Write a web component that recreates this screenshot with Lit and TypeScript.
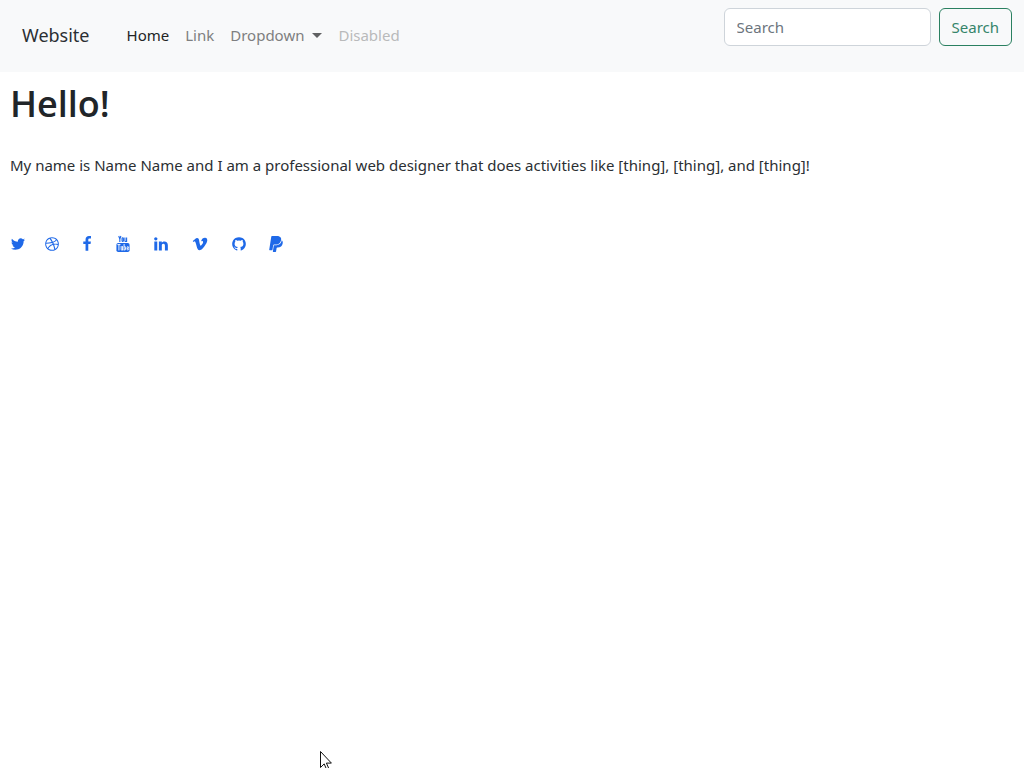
import { LitElement, html, css, svg } from "lit";
import { customElement } from "lit/decorators.js";

const glyph = (d: string) => svg`<path fill="currentColor" d=${d}></path>`;

const links = [
  {
    name: "Twitter",
    art: glyph("M1684 408q-67 98-162 167 1 14 1 42 0 130-38 259.5t-115.5 248.5-184.5 210.5-258 146-323 54.5q-271 0-496-145 35 4 78 4 225 0 401-138-105-2-188-64.5t-114-159.5q33 5 61 5 43 0 85-11-112-23-185.5-111.5t-73.5-205.5v-4q68 38 146 41-66-44-105-115t-39-154q0-88 44-163 121 149 294.5 238.5t371.5 99.5q-8-38-8-74 0-134 94.5-228.5t228.5-94.5q140 0 236 102 109-21 205-78-37 115-142 178 93-10 186-50z"),
  },
  {
    name: "Dribbble",
    art: glyph("M1152 1500q-42-241-140-498h-2l-2 1q-16 6-43 16.5t-101 49-137 82-131 114.5-103 148l-15-11q184 150 418 150 132 0 256-52zm-185-607q-21-49-53-111-311 93-673 93-1 7-1 21 0 124 44 236.5t124 201.5q50-89 123.5-166.5t142.5-124.5 130.5-81 99.5-48l37-13q4-1 13-3.5t13-4.5zm-107-212q-120-213-244-378-138 65-234 186t-128 272q302 0 606-80zm684 319q-210-60-409-29 87 239 128 469 111-75 185-189.5t96-250.5zm-803-741q-1 0-2 1 1-1 2-1zm590 145q-185-164-433-164-76 0-155 19 131 170 246 382 69-26 130-60.5t96.5-61.5 65.5-57 37.5-40.5zm223 485q-3-232-149-410l-1 1q-9 12-19 24.5t-43.5 44.5-71 60.5-100 65-131.5 64.5q25 53 44 95 2 5 6.5 17t7.5 17q36-5 74.5-7t73.5-2 69 1.5 64 4 56.5 5.5 48 6.5 36.5 6 25 4.5zm112 7q0 209-103 385.5t-279.5 279.5-385.5 103-385.5-103-279.5-279.5-103-385.5 103-385.5 279.5-279.5 385.5-103 385.5 103 279.5 279.5 103 385.5z"),
  },
  {
    name: "Facebook",
    art: glyph("M1343 12v264h-157q-86 0-116 36t-30 108v189h293l-39 296h-254v759h-306v-759h-255v-296h255v-218q0-186 104-288.5t277-102.5q147 0 228 12z"),
  },
  {
    name: "YouTube",
    art: svg`
      <path fill="none" stroke="currentColor" stroke-width="125" d="M420 0l120 340v340M660 0l-120 340M790 270q0-80 75-80t75 80v270q0 80-75 80t-75-80zM1110 180v380q0 60 60 60 60 0 130-80M1300 180v500"></path>
      <rect fill="currentColor" x="160" y="790" width="1472" height="1000" rx="200"></rect>
      <path fill="none" stroke="#fff" stroke-width="105" d="M270 960h340M440 960v660M690 1130v380q0 60 50 60 50 0 110-80M850 1130v490M1020 900v720M1020 1250q40-60 90-60 70 0 70 80v220q0 80-70 80-50 0-90-60M1510 1460v30q0 80-75 80t-75-80v-220q0-80 75-80t75 80v110h-150"></path>`,
  },
  {
    name: "LinkedIn",
    art: glyph("M477 625v991h-330v-991h330zm21-306q1 73-50.5 122t-135.5 49h-2q-82 0-132-49t-50-122q0-74 51.5-122.5t134.5-48.5 133 48.5 51 122.5zm1166 729v568h-329v-530q0-105-40.5-164.5t-126.5-59.5q-63 0-105.5 34.5t-63.5 85.5q-11 30-11 81v553h-329q2-399 2-647t-1-296l-1-48h329v144h-2q20-32 41-56t56.5-52 87-43.5 114.5-15.5q171 0 275 113.5t104 332.5z"),
  },
  {
    name: "Vimeo",
    art: glyph("M1709 518q-10 236-332 651-333 431-562 431-142 0-240-263-44-160-132-482-72-262-157-262-18 0-127 76l-77-98q24-21 108-96.5t130-115.5q156-138 241-146 95-9 153 55.5t81 203.5q44 287 66 373 55 249 120 249 51 0 154-161 101-161 109-246 13-139-109-139-57 0-121 26 120-393 459-382 251 8 236 326z"),
  },
  {
    name: "GitHub",
    art: glyph("M896 128q209 0 385.5 103t279.5 279.5 103 385.5q0 251-146.5 451.5t-378.5 277.5q-27 5-40-7t-13-30q0-3 .5-76.5t.5-134.5q0-97-52-142 57-6 102.5-18t94-39 81-66.5 53-105 20.5-150.5q0-119-79-206 37-91-8-204-28-9-81 11t-92 44l-38 24q-93-26-192-26t-192 26q-16-11-42.5-27t-83.5-38.5-85-13.5q-45 113-8 204-79 87-79 206 0 85 20.5 150t52.5 105 80.5 67 94 39 102.5 18q-39 36-49 103-21 10-45 15t-57 5-65.5-21.5-55.5-62.5q-19-32-48.5-52t-49.5-24l-20-3q-21 0-29 4.5t-5 11.5 9 14 13 12l7 5q22 10 43.5 38t31.5 51l10 23q13 38 44 61.5t67 30 69.5 7 55.5-3.5l23-4q0 38 .5 88.5t.5 54.5q0 18-13 30t-40 7q-232-77-378.5-277.5t-146.5-451.5q0-209 103-385.5t279.5-279.5 385.5-103z"),
  },
  {
    name: "PayPal",
    art: glyph("M1647 646q18 84-4 204-87 444-565 444h-44q-25 0-44 16.5t-24 42.5l-4 19-55 346-2 15q-5 26-24.5 42.5t-44.5 16.5h-251q-21 0-33-15t-9-36q9-56 26.5-168t26.5-168 27-167.5 27-167.5q5-37 43-37h131q133 2 236-21 175-39 287-144 102-95 155-246 24-70 35-133 1-6 2.5-7.5t3.5-1 6 3.5q79 59 98 162zm-172-282q0 107-46 236-80 233-302 315-113 40-252 42 0 1-90 1l-90-1q-100 0-118 96-2 8-85 530-1 10-12 10h-295q-22 0-36.5-16.5t-11.5-38.5l232-1471q5-29 27.5-48t51.5-19h598q34 0 97.5 13t111.5 32q107 41 163.5 123t56.5 196z"),
  },
];

@customElement("app-root")
export class AppRoot extends LitElement {
  static styles = css`
    :host {
      display: block;
      min-height: 100vh;
      background: #fff;
      color: #2b2f33;
      font-family: "Noto Sans", "Open Sans", sans-serif;
      font-size: 15px;
      line-height: 24px;
    }
    * {
      box-sizing: border-box;
    }
    a {
      text-decoration: none;
    }
    .navbar {
      display: flex;
      align-items: flex-start;
      padding: 8px 12px 8px 22px;
      background: #f8f9fa;
    }
    .brand {
      color: #2b2f33;
      font-size: 18px;
      line-height: 32px;
      padding: 11px 0 13px;
      margin-right: 29px;
    }
    .nav {
      display: flex;
      flex: 1;
      list-style: none;
      margin: 0;
      padding: 7px 0;
    }
    .nav-link {
      display: flex;
      align-items: center;
      gap: 8px;
      padding: 8px;
      color: #7e7f80;
      font: inherit;
      border: 0;
      background: none;
    }
    .active {
      color: #232425;
    }
    .disabled {
      color: #b9babb;
    }
    .caret {
      border: 5px solid transparent;
      border-top-color: #606162;
      border-bottom: 0;
    }
    .search {
      display: flex;
      gap: 8px;
    }
    .field,
    .submit {
      height: 38px;
      padding: 6px 12px;
      border: 1px solid #ced4da;
      border-radius: 6px;
      font: inherit;
    }
    .field {
      width: 207px;
      background: #fff;
      color: #212529;
    }
    .field::placeholder {
      color: #6c757d;
      opacity: 1;
    }
    .submit {
      border-color: #2a8060;
      background: transparent;
      color: #35856a;
    }
    .content {
      padding: 8px 10px;
    }
    .title {
      margin: 0;
      color: #212529;
      font-family: "Open Sans", "Noto Sans", sans-serif;
      font-size: 36px;
      font-weight: 600;
      line-height: 48px;
    }
    .intro {
      margin: 25px 0 55px;
    }
    .social {
      display: grid;
      grid-template-columns: 34px 35px 36px 38px 39px 39px 37px 16px;
      list-style: none;
      margin: 0;
      padding: 0;
    }
    .social-link {
      display: flex;
      padding: 4px 0;
      color: #1f69e8;
    }
    .icon {
      width: 16px;
      height: 16px;
      overflow: visible;
    }
    .pointer {
      position: fixed;
      left: 320px;
      top: 751px;
      width: 12px;
      height: 19px;
      pointer-events: none;
    }
  `;

  render() {
    return html`
      <nav class="navbar">
        <a class="brand" href="#">Website</a>
        <ul class="nav">
          <li><a class="nav-link active" href="#" aria-current="page">Home</a></li>
          <li><a class="nav-link" href="#">Link</a></li>
          <li>
            <button class="nav-link" type="button" aria-haspopup="true">
              Dropdown <span class="caret"></span>
            </button>
          </li>
          <li><a class="nav-link disabled" aria-disabled="true">Disabled</a></li>
        </ul>
        <form class="search" role="search" @submit=${(e: Event) => e.preventDefault()}>
          <input class="field" type="search" placeholder="Search" aria-label="Search" />
          <button class="submit" type="submit">Search</button>
        </form>
      </nav>
      <main class="content">
        <h1 class="title">Hello!</h1>
        <p class="intro">
          My name is Name Name and I am a professional web designer that does
          activities like [thing], [thing], and [thing]!
        </p>
        <ul class="social">
          ${links.map(
            (link) => html`<li>
              <a class="social-link" href="#" aria-label=${link.name}>
                <svg class="icon" viewBox="0 0 1792 1792" aria-hidden="true">${link.art}</svg>
              </a>
            </li>`
          )}
        </ul>
      </main>
      <svg class="pointer" viewBox="0 0 12 19" aria-hidden="true">
        <path
          d="M.5.5v16l3.7-3.6 2.4 5.6 2.2-1-2.4-5.4h5z"
          fill="#fff"
          stroke="#111"
        ></path>
      </svg>
    `;
  }
}
